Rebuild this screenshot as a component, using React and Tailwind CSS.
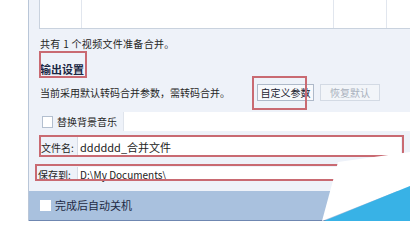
import React from 'react';

// 合并设置面板截图 — 输出设置部分（带红框标注）
const font = { fontFamily: '"Noto Sans CJK SC", "Noto Sans", sans-serif' };

const RedBox = ({ className }) => (
  <div className={`absolute border-2 border-[#c96a72] pointer-events-none ${className}`} />
);

export default function App() {
  return (
    <div className="relative w-[410px] h-[246px] bg-white overflow-hidden text-[10px] text-[#262626]" style={font}>
      <div className="ml-[28px] w-[382px] h-[221px] bg-[#eef2f9] border-l border-[#b9c6d8] flex flex-col">
        {/* 文件列表表格（底部） */}
        <div className="ml-[10px] h-[29px] flex bg-white border-l border-b border-[#c9d2de] shrink-0">
          <div className="w-[42px] border-r border-[#e1e6ee]" />
          <div className="w-[252px] border-r border-[#e1e6ee]" />
          <div className="w-[53px] border-r border-[#e1e6ee]" />
          <div className="flex-1" />
        </div>

        <div className="ml-[11px] mt-[7px] h-[16px] leading-[16px] tracking-[0.3px]">共有&nbsp;1&nbsp;个视频文件准备合并。</div>

        <div className="ml-[11px] mt-[9px] h-[16px] leading-[16px] font-bold text-[11px] text-[#1c2844]">输出设置</div>

        <div className="ml-[11px] mt-[7px] h-[17px] flex items-center">
          <span className="leading-[17px]">当前采用默认转码合并参数，需转码合并。</span>
          <button className="ml-[27px] w-[57px] h-[17px] border border-[#aeb9c9] bg-[#f7f9fc] text-[10px] text-[#1b2330] leading-none">自定义参数</button>
          <button className="ml-[6px] w-[60px] h-[17px] border border-[#d3dae4] bg-[#f2f5f9] text-[10px] text-[#a9b1bd] leading-none">恢复默认</button>
        </div>

        <div className="mt-[11px] h-[19px] flex items-center">
          <div className="ml-[13px] w-[11px] h-[12px] bg-white border border-[#b3bfcf]" />
          <span className="ml-[4px] w-[66px]">替换背景音乐</span>
          <div className="flex-1 h-[19px] bg-white border-l border-[#dfe4ec]" />
        </div>

        <div className="mt-[6px] h-[20px] flex items-center">
          <span className="ml-[12px] w-[36px]">文件名:</span>
          <div className="w-[324px] h-[20px] bg-white border-l border-[#d6dce6] flex items-center pl-[2px] text-[11px] text-[#222]">dddddd_合并文件</div>
        </div>

        <div className="mt-[10px] h-[14px] flex items-center">
          <span className="ml-[9px] w-[39px]">保存到:</span>
          <div className="w-[324px] h-[14px] bg-white border-l border-[#d6dce6] flex items-center pl-[2px] text-[10px] text-[#222]">D:\My Documents\</div>
        </div>

        <div className="mt-[10px] h-[30px] bg-[#a9c1de] border-b border-[#6f87b1] flex items-center">
          <div className="ml-[11px] w-[11px] h-[11px] bg-white" />
          <span className="ml-[4px] text-[11px] text-[#1e2a44]">完成后自动关机</span>
        </div>
      </div>

      {/* 红框标注 */}
      <RedBox className="left-[39px] top-[51px] w-[48px] h-[27px]" />
      <RedBox className="left-[252px] top-[76px] w-[55px] h-[34px]" />
      <RedBox className="left-[39px] top-[135px] w-[365px] h-[22px]" />
      <RedBox className="left-[35px] top-[164px] w-[350px] h-[17px]" />

      {/* 右下角翻页装饰 */}
      <div className="absolute left-[320px] top-[150px] w-[90px] h-[72px] bg-white [clip-path:polygon(18px_12px,90px_2px,90px_36px,2px_71px)]" />
      <div className="absolute left-[320px] top-[150px] w-[90px] h-[71px] bg-[#38b2e6] [clip-path:polygon(4px_71px,90px_36px,90px_71px)]" />
    </div>
  );
}
